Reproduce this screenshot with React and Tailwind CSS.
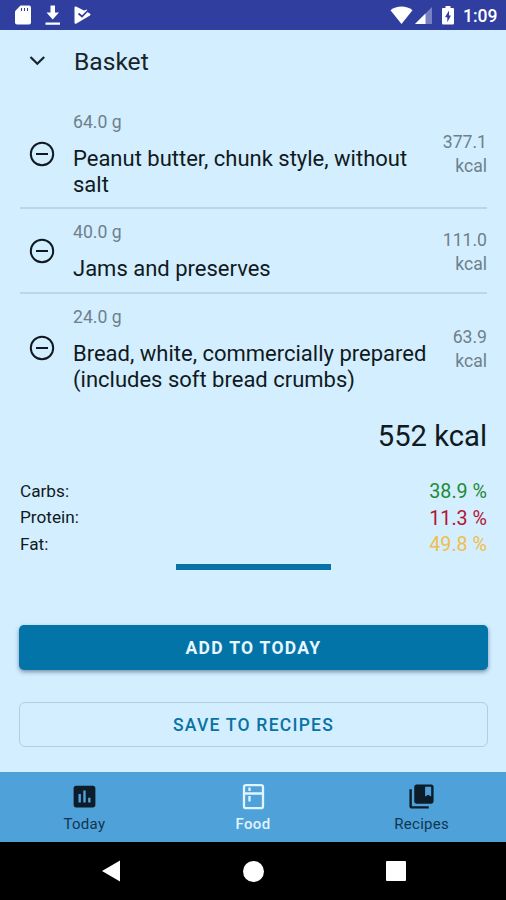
import React from "react";

const items = [
  { grams: "64.0 g", lines: ["Peanut butter, chunk style, without", "salt"], kcal: "377.1", row: "h-[111px]", icon: "pt-[42.5px]", energy: "pt-[32px]", text: "pt-[13px]" },
  { grams: "40.0 g", lines: ["Jams and preserves"], kcal: "111.0", row: "h-[85px]", icon: "pt-[29px]", energy: "pt-[19px]", text: "pt-[12px]" },
  { grams: "24.0 g", lines: ["Bread, white, commercially prepared", "(includes soft bread crumbs)"], kcal: "63.9", row: "h-[110px]", icon: "pt-[41px]", energy: "pt-[31px]", text: "pt-[12px]" },
];

const macros = [
  { label: "Carbs:", value: "38.9 %", color: "text-[#1f8a36]" },
  { label: "Protein:", value: "11.3 %", color: "text-[#b3152f]" },
  { label: "Fat:", value: "49.8 %", color: "text-[#f2bd4b]" },
];

function StatusBar() {
  return (
    <header className="flex h-[30px] shrink-0 items-start justify-between bg-[#303f9f] text-white">
      <div className="flex pl-[15px] pt-[5px]">
        <svg width="17" height="20" viewBox="0 0 17 20" fill="currentColor">
          <path d="M5.500 0.500H14a2 2 0 0 1 2 2V17.500a2 2 0 0 1-2 2H2a2 2 0 0 1-2-2V6.200Z" />
          <path d="M6.500 3v3M9.500 3v3M12.500 3v3" stroke="#303f9f" strokeWidth="1" />
        </svg>
        <svg className="ml-[13px]" width="16" height="21" viewBox="0 0 16 21" fill="currentColor">
          <path d="M5.500 0.500h4.500v7H14L7.700 14.500 1.500 7.500h4ZM0.500 17.500h14.500v2.300H0.500Z" />
        </svg>
        <svg className="ml-[13px]" width="18" height="20" viewBox="0 0 18 20">
          <path d="M0.500 2.500Q0.500 1 2 1.500L10 5.500 13 4.500 13.500 7.200 16 8.500Q17 9.500 16 10.500L2 18.700Q0.500 19 0.500 17.500Z" fill="currentColor" />
          <path d="M4.500 8.500 8 11.500 15 4.500" stroke="#303f9f" strokeWidth="1.700" fill="none" />
        </svg>
      </div>
      <div className="flex pr-[9px] pt-[6px]">
        <svg width="23" height="19" viewBox="0 0 23 19" fill="currentColor">
          <path d="M0.500 4.200C6.500-0.800 16.500-0.800 22.500 4.200L11.500 18Z" />
        </svg>
        <svg className="ml-[1px]" width="19" height="19" viewBox="0 0 19 19" fill="currentColor">
          <path d="M18 1V18H1Z" opacity="0.350" />
          <path d="M11.500 7.500V18H1Z" />
        </svg>
        <svg className="ml-[8px]" width="14" height="19" viewBox="0 0 14 19">
          <path d="M4.500 0H9.500V2H12Q13 2 13 3V17.500Q13 18.500 12 18.500H2Q1 18.500 1 17.500V3Q1 2 2 2H4.500Z" fill="currentColor" />
          <path d="M8 4.500 4 11.200H6.300V16.200L10 9.500H8Z" fill="#303f9f" />
        </svg>
        <span className="-mt-[1px] ml-[8px] w-[34px] whitespace-nowrap text-[17.5px] font-medium leading-[22px]">1:09</span>
      </div>
    </header>
  );
}

function MinusCircle() {
  return (
    <svg width="26" height="26" viewBox="0 0 26 26" fill="none" stroke="#10191f" strokeWidth="2">
      <circle cx="13" cy="13" r="11.200" />
      <path d="M7 13h12" />
    </svg>
  );
}

function FoodRow({ item, last }) {
  return (
    <li className={`flex ${item.row} ${last ? "" : "border-b-2 border-[#bbd7e7]"}`}>
      <div className={`w-[53px] pl-[9px] ${item.icon}`}><MinusCircle /></div>
      <div className={`flex-1 whitespace-nowrap ${item.text}`}>
        <p className="text-[17.6px] leading-[22px] text-[#6e808b]">{item.grams}</p>
        <div className="pt-[13px] text-[22px] leading-[26px] text-[#101a20]">
          {item.lines.map((l) => <p key={l}>{l}</p>)}
        </div>
      </div>
      <div className={`text-right text-[17.6px] leading-[24px] text-[#6e808b] ${item.energy}`}>
        <p>{item.kcal}</p>
        <p>kcal</p>
      </div>
    </li>
  );
}

function Tab({ label, active, children }) {
  return (
    <div className={`flex flex-1 flex-col items-center pt-[10px] ${active ? "text-[#e2f4ff]" : "text-[#0c1c28]"}`}>
      {children}
      <span className={`mt-[3px] text-[15px] leading-[20px] tracking-[0.3px] ${active ? "font-medium" : "text-[#12364f]"}`}>{label}</span>
    </div>
  );
}

export default function App() {
  return (
    <div className="flex h-[900px] w-[506px] flex-col overflow-hidden bg-[#d3eeff] font-['Roboto',sans-serif]">
      <StatusBar />
      <main className="flex h-[742px] shrink-0 flex-col pl-[20px] pr-[19px]">
        <div className="flex h-[68px] items-start">
          <svg className="ml-[9px] mt-[25px]" width="17" height="12" viewBox="0 0 17 12" fill="none" stroke="#18232a" strokeWidth="2.200">
            <path d="M1.500 2 8.300 8.800 15.200 2" />
          </svg>
          <h1 className="ml-[28px] mt-[16px] text-[24.6px] leading-[32px] text-[#18232a]">Basket</h1>
        </div>
        <ul>
          {items.map((item, i) => <FoodRow key={item.grams} item={item} last={i === 2} />)}
        </ul>
        <p className="mt-[14px] text-right text-[29.2px] leading-[36px] text-[#101a20]">552 kcal</p>
        <div className="mt-[24px]">
          {macros.map((m) => (
            <div key={m.label} className="flex h-[26.500px] items-center justify-between">
              <span className="pt-[1px] text-[17.2px] text-[#101a20]">{m.label}</span>
              <span className={`pt-[1.5px] text-[19.7px] ${m.color}`}>{m.value}</span>
            </div>
          ))}
        </div>
        <div className="ml-[156px] mt-[6px] h-[6px] w-[155px] bg-[#0872a6]" />
        <button className="-mx-[1px] mt-[55px] h-[45px] shrink-0 rounded-[5px] bg-[#0274a8] pt-[2px] text-[17.5px] font-bold tracking-[1.3px] text-[#e8f6ff] shadow-[0_2px_4px_rgba(30,50,90,0.5)]">ADD TO TODAY</button>
        <button className="-mx-[1px] mt-[32px] h-[45px] shrink-0 rounded-[6px] border border-[#b0cfdf] pt-[2px] text-[17.5px] font-medium tracking-[1.25px] text-[#0872a6]">SAVE TO RECIPES</button>
      </main>
      <nav className="flex h-[70px] shrink-0 bg-[#4ea1d9]">
        <Tab label="Today">
          <svg width="29" height="29" viewBox="0 0 24 24" fill="currentColor">
            <path d="M19 3H5c-1.100 0-2 .9-2 2v14c0 1.100.9 2 2 2h14c1.100 0 2-.9 2-2V5c0-1.100-.9-2-2-2zM9 17H7v-7h2v7zm4 0h-2V7h2v10zm4 0h-2v-4h2v4z" />
          </svg>
        </Tab>
        <Tab label="Food" active>
          <svg width="29" height="29" viewBox="0 0 29 29" fill="none" stroke="currentColor" strokeWidth="2.300">
            <rect x="5" y="3.200" width="19" height="23" rx="2" />
            <path d="M5 11.500h19M10.500 5.500v3.500M10.500 14v5.500" />
          </svg>
        </Tab>
        <Tab label="Recipes">
          <svg width="29" height="29" viewBox="0 0 24 24" fill="currentColor">
            <path d="M4 6H2v14c0 1.100.9 2 2 2h14v-2H4V6z" />
            <path d="M20 2H8c-1.100 0-2 .9-2 2v12c0 1.100.9 2 2 2h12c1.100 0 2-.9 2-2V4c0-1.100-.9-2-2-2zm0 10-2.500-1.500L15 12V4h5v8z" />
          </svg>
        </Tab>
      </nav>
      <footer className="flex h-[58px] shrink-0 items-center justify-between bg-black pl-[101px] pr-[100px]">
        <svg width="20" height="22" viewBox="0 0 20 22" fill="white"><path d="M19 0.500V21.500L1 11Z" /></svg>
        <div className="h-[21px] w-[21px] rounded-full bg-white" />
        <div className="h-[20px] w-[20px] rounded-[1px] bg-white" />
      </footer>
    </div>
  );
}
